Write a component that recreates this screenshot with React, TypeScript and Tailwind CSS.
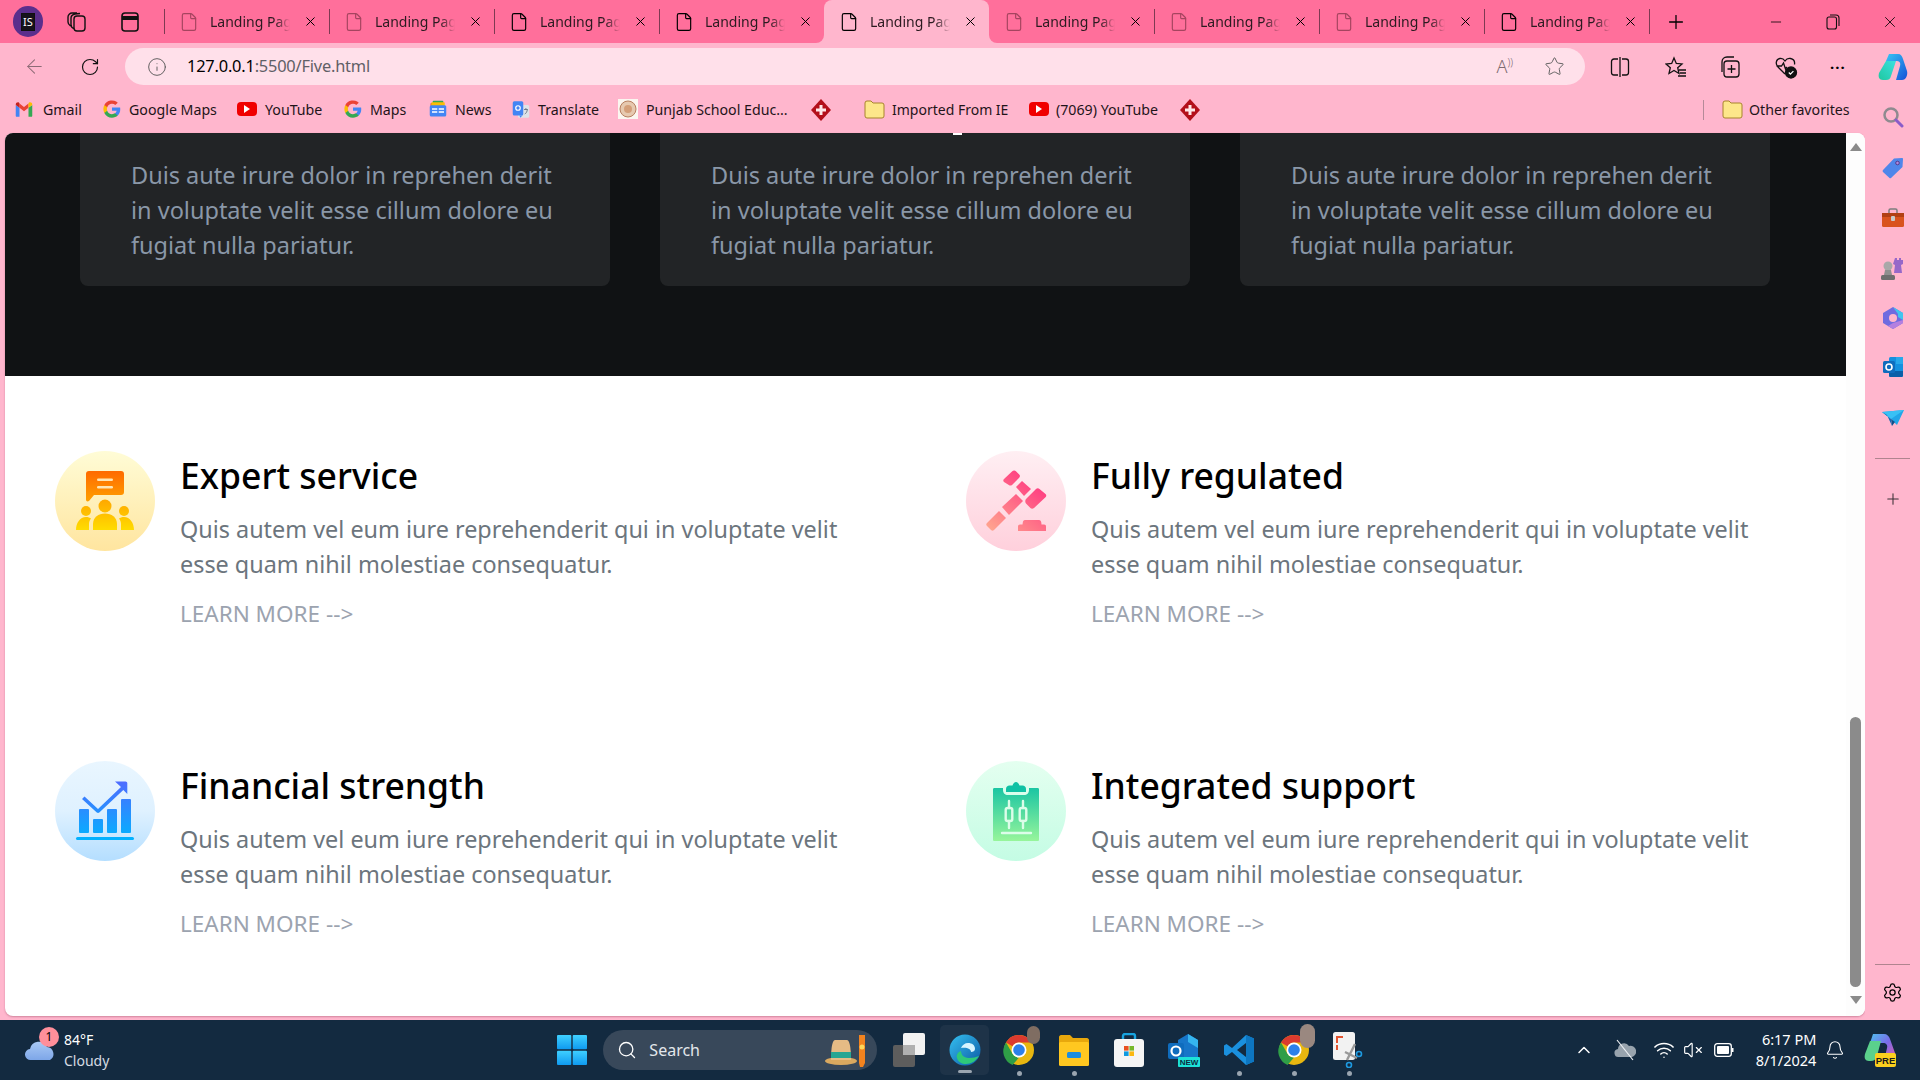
import { ArrowLeft, Bell, ChevronUp, File, Info, Minus, Plus, RotateCw, Search, Settings, Star, VolumeX, Wifi, X } from "lucide-react";

const tabsLeft = [false, false, true, true];
const tabsRight = [false, false, false, true];

const Tab = ({ dark, sep = true }: { dark: boolean; sep?: boolean }) => (
  <div className="relative flex h-[43px] w-[165px] items-center pl-[15px]">
    {sep && <div className="absolute left-0 top-[9px] h-[25px] w-px bg-[#7d3a52]" />}
    <File size={20} strokeWidth={1.4} className={dark ? "text-black" : "text-[#a5445f]"} />
    <span className="ml-[11px] w-[80px] overflow-hidden whitespace-nowrap text-[14px] text-[#2b1a20] [mask-image:linear-gradient(90deg,#000_82%,transparent)]">Landing Page</span>
    <X size={15} strokeWidth={1.6} className="ml-[13px] text-black" />
  </div>
);

const GoogleG = () => (
  <svg width="18" height="18" viewBox="0 0 24 24">
    <path fill="#4285F4" d="M23 12.3c0-.8-.1-1.6-.2-2.3H12v4.4h6.2a5.300 5.300 0 0 1-2.300 3.500v2.900h3.700C21.800 18.800 23 15.800 23 12.300z" />
    <path fill="#34A853" d="M12 23.500c3.100 0 5.700-1 7.600-2.800l-3.700-2.900c-1 .7-2.300 1.100-3.900 1.100-3 0-5.500-2-6.400-4.700H1.800v3A11.500 11.500 0 0 0 12 23.500z" />
    <path fill="#FBBC05" d="M5.600 14.200a6.900 6.900 0 0 1 0-4.400v-3H1.800a11.500 11.500 0 0 0 0 10.400l3.800-3z" />
    <path fill="#EA4335" d="M12 5.100c1.700 0 3.200.6 4.400 1.700l3.300-3.300A11.500 11.500 0 0 0 1.800 6.800l3.800 3C6.500 7.100 9 5.100 12 5.100z" />
  </svg>
);

const Gmail = () => (
  <svg width="18" height="15" viewBox="0 0 24 20">
    <path fill="#4285F4" d="M1 18.500V4l5 3.800v12H2.500A1.500 1.500 0 0 1 1 18.500z" />
    <path fill="#34A853" d="M18 7.800 23 4v14.500a1.500 1.500 0 0 1-1.500 1.300H18z" />
    <path fill="#EA4335" d="M6 7.800V2l6 4.500L18 2v5.800l-6 4.500z" />
    <path fill="#C5221F" d="M1 4v-.5C1 1 3.700-.3 5.500 1L6 2v5.800z" />
    <path fill="#FBBC04" d="M18 2l.5-1C20.300-.3 23 1 23 3.500V4l-5 3.800z" />
  </svg>
);

const YouTubeIcon = () => (
  <div className="flex h-[14px] w-[20px] items-center justify-center rounded-[4px] bg-[#f00000]">
    <div className="h-0 w-0 border-y-[4px] border-l-[6px] border-y-transparent border-l-white" />
  </div>
);

const NewsIcon = () => (
  <svg width="18" height="18" viewBox="0 0 24 24">
    <rect x="5" y="1" width="14" height="6" rx="1" fill="#34A853" />
    <rect x="2" y="4" width="16" height="6" rx="1" fill="#EA4335" />
    <rect x="3" y="3" width="18" height="6" rx="1" fill="#FBBC05" />
    <rect x="1" y="7" width="22" height="15" rx="2" fill="#4285F4" />
    <rect x="4" y="11" width="7" height="2" fill="#fff" />
    <rect x="4" y="15" width="7" height="2" fill="#fff" />
    <rect x="13" y="11" width="7" height="2" fill="#fff" />
    <rect x="13" y="15" width="7" height="2" fill="#fff" />
  </svg>
);

const TranslateIcon = () => (
  <svg width="19" height="19" viewBox="0 0 24 24">
    <rect x="8" y="6" width="15" height="17" rx="2" fill="#dfe3e8" />
    <path d="M11 23l3-3h-4z" fill="#4285F4" />
    <rect x="1" y="1" width="14" height="19" rx="2" fill="#4285F4" />
    <circle cx="8" cy="10" r="3" fill="none" stroke="#fff" strokeWidth="1.6" />
    <path d="M16 12h5M18.500 10v2M17 18c2-1 3-3 3.500-6" stroke="#5f6b7a" strokeWidth="1.100" fill="none" />
  </svg>
);

const SchoolIcon = () => (
  <svg width="20" height="20" viewBox="0 0 20 20">
    <rect width="20" height="20" fill="#fbf6f0" />
    <circle cx="10" cy="10" r="8" fill="#e6c9b0" stroke="#b77f5f" />
    <circle cx="10" cy="10" r="4" fill="#d49f7a" />
  </svg>
);

const Diamond = () => (
  <svg width="20" height="22" viewBox="0 0 20 22">
    <path d="M10 0 20 11 10 22 0 11z" fill="#b30f1a" />
    <path d="M8.500 6h3v3.500H15v3h-3.500V16h-3v-3.500H5v-3h3.500z" fill="#fde8e8" />
  </svg>
);

const FolderIcon = () => (
  <svg width="21" height="19" viewBox="0 0 21 19">
    <path d="M1 3a2 2 0 0 1 2-2h4l2 2h9a2 2 0 0 1 2 2v11a2 2 0 0 1-2 2H3a2 2 0 0 1-2-2z" fill="#fde68a" stroke="#a8842c" />
  </svg>
);

const bookmarks = [
  { icon: <Gmail />, label: "Gmail", box: "w-[18px]", ml: "ml-[10px]", w: "w-[38px]", gap: "mr-[22px]" },
  { icon: <GoogleG />, label: "Google Maps", box: "w-[18px]", ml: "ml-[8px]", w: "w-[88px]", gap: "mr-[20px]" },
  { icon: <YouTubeIcon />, label: "YouTube", box: "w-[20px]", ml: "ml-[8px]", w: "w-[57px]", gap: "mr-[22px]" },
  { icon: <GoogleG />, label: "Maps", box: "w-[18px]", ml: "ml-[8px]", w: "w-[36px]", gap: "mr-[23px]" },
  { icon: <NewsIcon />, label: "News", box: "w-[18px]", ml: "ml-[8px]", w: "w-[36px]", gap: "mr-[21px]" },
  { icon: <TranslateIcon />, label: "Translate", box: "w-[18px]", ml: "ml-[8px]", w: "w-[58px]", gap: "mr-[22px]" },
  { icon: <SchoolIcon />, label: "Punjab School Educ...", box: "w-[20px]", ml: "ml-[8px]", w: "w-[141px]", gap: "mr-[24px]" },
];

const Bookmark = ({ icon, label, box, ml, w, gap }: { icon: React.ReactNode; label: string; box: string; ml: string; w: string; gap: string }) => (
  <div className={`flex items-center ${gap}`}>
    <div className={`flex items-center justify-center ${box}`}>{icon}</div>
    <span className={`whitespace-nowrap ${ml} ${w}`}>{label}</span>
  </div>
);

const Chrome = () => (
  <svg width="32" height="32" viewBox="0 0 32 32">
    <circle cx="16" cy="16" r="15" fill="#e8b710" />
    <path d="M16 1a15 15 0 0 1 13 7.500H16a7.500 7.500 0 0 0-6.500 3.800L3 8.500A15 15 0 0 1 16 1z" fill="#db3a2f" />
    <path d="M3 8.500l6.500 11.300A7.500 7.500 0 0 0 16 23.500L9.500 31A15 15 0 0 1 3 8.500z" fill="#2f9e47" />
    <circle cx="16" cy="16" r="7.500" fill="#fff" />
    <circle cx="16" cy="16" r="5.800" fill="#2d80ea" />
  </svg>
);

const ExpertIcon = () => (
  <svg width="100" height="100" viewBox="0 0 100 100">
    <defs>
      <linearGradient id="ex1" x1="0" y1="0" x2="0" y2="1"><stop offset="0" stopColor="#ff6a00" /><stop offset="1" stopColor="#ffa000" /></linearGradient>
      <linearGradient id="ex2" gradientUnits="userSpaceOnUse" x1="0" y1="48" x2="0" y2="79"><stop offset="0" stopColor="#ffa600" /><stop offset="1" stopColor="#ffdc00" /></linearGradient>
    </defs>
    <path d="M34 20h32a3 3 0 0 1 3 3v18a3 3 0 0 1-3 3H39l-5 6c-1.500 1-3 .5-3-1.500V23a3 3 0 0 1 3-3z" fill="url(#ex1)" />
    <rect x="42" y="27.500" width="16" height="2.500" rx="1.200" fill="#ffe6b3" />
    <rect x="42" y="35" width="16" height="2.500" rx="1.200" fill="#ffe6b3" />
    <g fill="url(#ex2)">
      <circle cx="50" cy="55" r="6.500" />
      <path d="M38 79v-6c0-6.500 5.500-10.500 12-10.500S62 66.500 62 73v6z" />
      <circle cx="31" cy="60" r="5" />
      <path d="M21 79c0-7 4-13 10-13 2 0 4 .6 5 1.500-1.600 2-2 4-2 6v5.500z" />
      <circle cx="69" cy="60" r="5" />
      <path d="M79 79c0-7-4-13-10-13-2 0-4 .6-5 1.500 1.600 2 2 4 2 6v5.500z" />
    </g>
  </svg>
);

const GavelIcon = () => (
  <svg width="100" height="100" viewBox="0 0 100 100">
    <defs>
      <linearGradient id="ga2" gradientUnits="userSpaceOnUse" x1="22" y1="80" x2="70" y2="22"><stop offset="0" stopColor="#ffa88f" /><stop offset="1" stopColor="#ff3280" /></linearGradient>
    </defs>
    <g fill="url(#ga2)">
      <path d="M38 28 46 20.500c1.300-1.200 3-1.200 4.200 0l3 3c1 1 1 2.200 0 3.200L46 34c-1 .8-2.200.8-3.200 0L38 31c-1-.8-1-2.200 0-3z" />
      <path d="m50 36 6-6 9 8-7 7z" />
      <path d="M60 48 70 38c1-1 2.500-1 3.500 0l6 5c1 1 1 2.200 0 3.200L68 57c-1.200 1-2.600 1-3.600 0L60 52.500c-1-1.200-1-3.200 0-4.500z" />
      <path d="m36 56 14-13 7 7-14 14z" />
      <path d="m21 72 12-12 7 7-12 12c-1 1-2 1-3 0l-4-4c-1-1-1-2 0-3z" />
      <path d="M59 69h14c1.500 0 2 1 2.300 2.500l.2 2H78c1.500 0 2 .8 2 2V80H52v-4.500c0-1.200.8-2 2-2h2.500l.3-2C57 70 57.600 69 59 69z" />
    </g>
  </svg>
);

const ChartIcon = () => (
  <svg width="100" height="100" viewBox="0 0 100 100">
    <defs>
      <linearGradient id="ch1" gradientUnits="userSpaceOnUse" x1="0" y1="20" x2="0" y2="80"><stop offset="0" stopColor="#4f6bff" /><stop offset="1" stopColor="#00b4ff" /></linearGradient>
    </defs>
    <g fill="url(#ch1)">
      <rect x="24" y="48" width="10" height="24" rx="1" />
      <rect x="38" y="58" width="10" height="14" rx="1" />
      <rect x="52" y="48" width="10" height="24" rx="1" />
      <rect x="66" y="38" width="10" height="34" rx="1" />
      <rect x="21" y="76" width="58" height="3" rx="1.500" />
      <path d="M60 20.500h10.500c1 0 1.800.8 1.800 1.800V33l-4-4-24 22.500c-.7.600-1.800.6-2.500 0L27 38l2.500-2.500L43 48 66 26l-6-5.500z" />
    </g>
  </svg>
);

const ClipboardIcon = () => (
  <svg width="100" height="100" viewBox="0 0 100 100">
    <defs>
      <linearGradient id="cl1" gradientUnits="userSpaceOnUse" x1="0" y1="21" x2="0" y2="80"><stop offset="0" stopColor="#0cc0a4" /><stop offset="1" stopColor="#97f59b" /></linearGradient>
    </defs>
    <path d="M28.500 27H37v2c0 3 2 5 5 5h16c3 0 5-2 5-5v-2h8.500c1 0 1.500.5 1.500 1.500V78.500c0 1-.5 1.500-1.500 1.500h-43c-1 0-1.500-.5-1.500-1.500V28.500c0-1 .5-1.500 1.500-1.500z" fill="url(#cl1)" />
    <path d="M40 28c0-2 1.500-3.500 3.500-3.500h3c.8-2 2-3.500 3.500-3.500s2.700 1.500 3.500 3.500h3c2 0 3.500 1.500 3.500 3.500v3H40z" fill="#10c1a4" />
    <g fill="none" stroke="#dcfde9" strokeWidth="2.400" strokeLinecap="round">
      <path d="M43 40v7M43 60v7M57 40v7M57 60v7" />
      <rect x="39.700" y="47" width="6.600" height="13" rx="2" />
      <rect x="53.700" y="47" width="6.600" height="13" rx="2" />
      <path d="M36 72h29" />
    </g>
  </svg>
);

const features = [
  { title: "Expert service", circle: "bg-gradient-to-b from-[#fffcd6] to-[#ffe59f]", icon: <ExpertIcon /> },
  { title: "Fully regulated", circle: "bg-gradient-to-b from-[#ffeff3] to-[#ffd0dc]", icon: <GavelIcon /> },
  { title: "Financial strength", circle: "bg-gradient-to-b from-[#e9f6ff] via-[#dff1ff] to-[#b4deff]", icon: <ChartIcon /> },
  { title: "Integrated support", circle: "bg-gradient-to-b from-[#e4fff0] to-[#c4fce4]", icon: <ClipboardIcon /> },
];

const Feature = ({ title, circle, icon }: { title: string; circle: string; icon: React.ReactNode }) => (
  <div className="flex">
    <div className={`h-[100px] w-[100px] shrink-0 rounded-full ${circle}`}>{icon}</div>
    <div className="ml-[25px]">
      <h3 className="text-[35.5px] font-medium leading-[48px] text-black">{title}</h3>
      <p className="mt-[13px] w-[700px] text-[23.4px] leading-[35px] text-[#6c757d]">
        Quis autem vel eum iure reprehenderit qui in voluptate velit esse quam nihil molestiae consequatur.
      </p>
      <a className="mt-[14px] block text-[22.5px] leading-[35px] text-[#9ca3af]">LEARN MORE --&gt;</a>
    </div>
  </div>
);

const DarkCard = ({ peek }: { peek?: boolean }) => (
  <div className="relative h-[153px] w-[530px] rounded-b-lg bg-[#222426] pl-[51px] pt-[25px] text-[23.5px] leading-[35px] text-[#8a97a8]">
    {peek && <div className="absolute left-[293px] top-0 h-[2px] w-[9px] bg-white" />}
    <p className="w-[440px]">Duis aute irure dolor in reprehen derit in voluptate velit esse cillum dolore eu fugiat nulla pariatur.</p>
  </div>
);

const SideIcons = () => (
  <div className="flex w-[55px] flex-col items-center bg-[#ffb6cd]">
    <svg className="mt-[-27px]" width="22" height="22" viewBox="0 0 22 22"><circle cx="9" cy="9" r="6.500" fill="none" stroke="#8f8a8f" strokeWidth="2.500" /><path d="M14 14l6 6" stroke="#8a5cc8" strokeWidth="3" strokeLinecap="round" /></svg>
    <svg className="mt-[29px]" width="22" height="22" viewBox="0 0 22 22"><path d="M1 13 12 1.500 20 1c.6 0 1 .4 1 1l-.5 8L9 21c-.5.4-1 .4-1.500 0L1 15c-.5-.6-.5-1.500 0-2z" fill="#4f86ea" /><circle cx="15.500" cy="6" r="1.800" fill="#b08be0" stroke="#553a8a" /></svg>
    <svg className="mt-[29px]" width="22" height="20" viewBox="0 0 22 20"><path d="M7 6V2.500C7 1.500 7.500 1 8.500 1h5c1 0 1.500.5 1.500 1.500V6" fill="none" stroke="#7d7d7d" strokeWidth="1.500" /><rect y="5" width="22" height="14" rx="1.500" fill="#d9531e" /><rect y="5" width="22" height="4" fill="#b23f13" /><rect x="9" y="8" width="4" height="5" rx="1" fill="#c9c9c9" /></svg>
    <svg className="mt-[28px]" width="24" height="24" viewBox="0 0 24 24"><path d="M14 2h2v2h2V2h2v2h2V2h0v6l-2 1 1 8h-8l1-8-2-1z" fill="#9668c9" /><circle cx="7" cy="10" r="4.500" fill="#a8a8a8" /><path d="M4 14h6l1 5H3z" fill="#8f8f8f" /><rect y="19" width="14" height="5" rx="1.500" fill="#6e6e6e" /></svg>
    <svg className="mt-[27px]" width="20" height="22" viewBox="0 0 20 22"><path d="M10 0 20 6v10l-10 6L0 16V6z" fill="#6f6be0" /><path d="M10 0 20 6v7l-5-3V7z" fill="#41c5ee" /><path d="M20 13v3l-10 6-5-3 5-3z" fill="#b47fe0" /><circle cx="10" cy="11" r="4" fill="#ffb6cd" /></svg>
    <svg className="mt-[28px]" width="20" height="20" viewBox="0 0 20 20"><rect x="6" y="0" width="14" height="20" rx="1.500" fill="#1490df" /><rect x="13" y="0" width="7" height="7" fill="#28a8ea" /><path d="M6 14h14v4.500c0 .8-.7 1.500-1.500 1.500H7.500C6.700 20 6 19.300 6 18.500z" fill="#0a5fa8" /><rect x="0" y="4" width="12" height="12" rx="1.500" fill="#0f6cbd" /><circle cx="6" cy="10" r="3" fill="none" stroke="#fff" strokeWidth="1.600" /></svg>
    <svg className="mt-[33px]" width="22" height="16" viewBox="0 0 22 16"><path d="M0 2 22 0 15 15 9 9z" fill="#22a6e8" /><path d="M0 2 22 0 9 9z" fill="#39c1f5" /><path d="M9 9 10 16l3-4z" fill="#0f4f8a" /><path d="M0 2l9 7 1 7-5-11z" fill="#1468b5" /></svg>
    <div className="mt-[32px] h-px w-[35px] bg-[#b0848f]" />
    <Plus size={18} strokeWidth={1.4} className="mt-[31px] text-[#3a3036]" />
    <div className="mt-auto h-px w-[35px] bg-[#b0848f]" />
    <Settings size={21} strokeWidth={1.4} className="mb-[17px] mt-[17px] text-black" />
  </div>
);

function TaskItem({ children, dot = false }: { children: React.ReactNode; dot?: boolean }) {
  return (
    <div className="relative flex h-[50px] w-[32px] items-center justify-center">
      {children}
      {dot && <div className="absolute bottom-[-1px] h-[5px] w-[5px] rounded-full bg-[#9aa5b0]" />}
    </div>
  );
}

export default function App() {
  return (
    <div className="flex h-screen w-full flex-col overflow-hidden bg-[#ffb6cd] font-['Noto_Sans',sans-serif]">
      {/* tab strip */}
      <div className="flex h-[43px] shrink-0 bg-[#ffb6cd]">
        <div className="flex w-[824px] rounded-br-lg bg-[#ff6f9b]">
          <div className="flex w-[164px] items-center">
            <div className="ml-[13px] flex h-[31px] w-[30px] items-center justify-center rounded-full bg-[#5b2e8c]">
              <div className="border border-[#101010] bg-[#16121c] px-[1px] text-[11px] leading-[16px] text-white">IS</div>
            </div>
            <svg className="ml-[23px]" width="22" height="22" viewBox="0 0 22 22" fill="none" stroke="#111" strokeWidth="1.400"><rect x="8" y="5" width="11" height="15" rx="3" /><path d="M8 17.500c-2-.5-3-2-3-4V7c0-2 2-3.500 4-4l5-.5M4.500 15C3 14 2 13 2 11V6c0-2 2-4 4-4h5" /></svg>
            <svg className="ml-[33px]" width="18" height="20" viewBox="0 0 18 20" fill="none" stroke="#111" strokeWidth="1.600"><rect x="1" y="1" width="16" height="18" rx="3" /><path d="M1 6h16" strokeWidth="4" /></svg>
          </div>
          {tabsLeft.map((dark, i) => (
            <Tab key={i} dark={dark} />
          ))}
        </div>
        <div className="w-[165px] bg-[#ff6f9b]">
          <div className="flex h-[43px] items-center rounded-t-lg bg-[#ffb6cd] pl-[15px]">
            <File size={20} strokeWidth={1.4} className="text-black" />
            <span className="ml-[11px] w-[80px] overflow-hidden whitespace-nowrap text-[14px] text-[#2b1a20] [mask-image:linear-gradient(90deg,#000_82%,transparent)]">Landing Page</span>
            <X size={15} strokeWidth={1.6} className="ml-[13px] text-black" />
          </div>
        </div>
        <div className="flex flex-1 rounded-bl-lg bg-[#ff6f9b]">
          {tabsRight.map((dark, i) => (
            <Tab key={i} dark={dark} sep={i > 0} />
          ))}
          <div className="h-[25px] w-px self-center bg-[#7d3a52]" />
          <Plus size={22} strokeWidth={1.4} className="ml-[15px] self-center text-black" />
          <Minus size={16} strokeWidth={1.2} className="ml-[81px] self-center text-black" />
          <svg className="ml-[42px] self-center" width="14" height="16" viewBox="0 0 14 16" fill="none" stroke="#111" strokeWidth="1.100"><rect x="1" y="3" width="9.500" height="12" rx="2" /><path d="M4 1h6c2 0 3 1 3 3v8" /></svg>
          <X size={18} strokeWidth={1.1} className="ml-[41px] self-center text-black" />
        </div>
      </div>

      {/* address bar */}
      <div className="flex h-[45px] shrink-0 items-center bg-[#ffb6cd] pt-[2px]">
        <ArrowLeft size={23} strokeWidth={1.1} className="ml-[23px] text-[#8d6a76]" />
        <RotateCw size={20} strokeWidth={1.4} className="ml-[34px] text-[#111]" />
        <div className="ml-[25px] flex h-[37px] w-[1460px] items-center rounded-full bg-[#ffe0ea]">
          <Info size={20} strokeWidth={1.1} className="ml-[22px] text-[#555]" />
          <span className="ml-[20px] text-[16.4px] tracking-[-0.2px] text-black">127.0.0.1<span className="text-[#5f5f66]">:5500/Five.html</span></span>
          <span className="ml-auto text-[18px] font-light text-[#7c6a70]">A<span className="align-super text-[10px]">))</span></span>
          <Star size={21} strokeWidth={1.1} className="ml-[31px] mr-[20px] text-[#5f5f5f]" />
        </div>
        <svg className="ml-[25px]" width="20" height="22" viewBox="0 0 20 22" fill="none" stroke="#111" strokeWidth="1.300"><path d="M8 3H4C2.500 3 1.500 4 1.500 5.500v11C1.500 18 2.500 19 4 19h4M12 3h4c1.500 0 2.500 1 2.500 2.500v11c0 1.500-1 2.500-2.500 2.500h-4M10 1v20" /></svg>
        <svg className="ml-[35px]" width="22" height="22" viewBox="0 0 22 22" fill="none" stroke="#111" strokeWidth="1.300"><path d="M9 2l2.300 5.400 5.700.5-4.300 3.800 1.300 5.800L9 14.500l-5 3 1.300-5.800L1 8l5.700-.6zM14 14h7M15 17h6M13 20h8" /></svg>
        <svg className="ml-[32px]" width="22" height="24" viewBox="0 0 22 24" fill="none" stroke="#111" strokeWidth="1.300"><rect x="5" y="6" width="15" height="16" rx="3" /><path d="M3 17V7c0-3 2-5 5-5h7M12.500 10v8M8.500 14h8" /></svg>
        <svg className="ml-[33px]" width="24" height="24" viewBox="0 0 24 24" fill="none" stroke="#111" strokeWidth="1.300"><path d="M11 19 4 12C1 9 2 4 6 3.500c2.500-.3 4 1 5 2.500 1-1.500 3-3 5.500-2.500 3 .6 4.500 3 4 6M2.500 11h5l2-3 2 6 1.500-2" /><circle cx="17" cy="17.500" r="5.500" fill="#111" /><path d="M14.800 17.500l1.600 1.600 3-3" stroke="#fff" /></svg>
        <span className="ml-[32px] text-[15px] font-bold leading-[10px] tracking-[1px] text-black">···</span>
        <svg className="ml-[32px]" width="30" height="30" viewBox="0 0 30 30">
          <defs>
            <linearGradient id="cop1" x1="0" y1="0" x2="1" y2="1"><stop offset="0" stopColor="#37c6f4" /><stop offset="1" stopColor="#1450d8" /></linearGradient>
            <linearGradient id="cop2" x1="0" y1="1" x2="1" y2="0"><stop offset="0" stopColor="#1fc8a0" /><stop offset="1" stopColor="#3ce0e0" /></linearGradient>
          </defs>
          <path d="M11 2h9c3 0 4 2 5 5l4 12c1 4-1 9-5 9h-6l4-14c1-4-1-5-4-5H8z" fill="url(#cop1)" />
          <path d="M8 9h10l-5 15c-1 3-2 4-5 4H5c-4 0-5-3-4-7z" fill="url(#cop2)" />
        </svg>
      </div>

      {/* bookmarks */}
      <div className="flex h-[45px] shrink-0 items-center bg-[#ffb6cd] pb-[2px] pl-[15px] text-[14.2px] text-[#1f1419]">
        {bookmarks.map((b) => (
          <Bookmark key={b.label} {...b} />
        ))}
        <Diamond />
        <div className="ml-[33px] flex items-center">
          <FolderIcon />
          <span className="ml-[7px] w-[115px] whitespace-nowrap text-[14px]">Imported From IE</span>
        </div>
        <div className="ml-[22px] flex items-center">
          <YouTubeIcon />
          <span className="ml-[7px] w-[102px] whitespace-nowrap">(7069) YouTube</span>
        </div>
        <div className="ml-[22px]"><Diamond /></div>
        <div className="ml-[503px] h-[20px] w-px bg-[#b58a98]" />
        <div className="ml-[18px] flex items-center">
          <FolderIcon />
          <span className="ml-[6px] whitespace-nowrap">Other favorites</span>
        </div>
      </div>

      {/* page */}
      <div className="flex min-h-0 flex-1">
        <div className="ml-[5px] flex h-[883px] w-[1860px] shrink-0 overflow-hidden rounded-lg bg-white shadow-[0_1px_2px_rgba(120,40,70,0.35)]">
          <div className="w-[1841px] shrink-0">
            <div className="flex h-[243px] justify-center gap-[50px] bg-[#101214] pr-[1px]">
              <DarkCard />
              <DarkCard peek />
              <DarkCard />
            </div>
            <div className="grid grid-cols-[911px_1fr] grid-rows-[310px_310px] pl-[50px] pt-[75px]">
              {features.map((f) => (
                <Feature key={f.title} {...f} />
              ))}
            </div>
          </div>
          <div className="flex w-[19px] flex-col items-center bg-[#fdfdfd]">
            <div className="mt-[10px] h-0 w-0 border-x-[6px] border-b-[8px] border-x-transparent border-b-[#8a8a8a]" />
            <div className="mt-[566px] h-[270px] w-[11px] rounded-full bg-[#8b8b8b]" />
            <div className="mt-[9px] h-0 w-0 border-x-[6px] border-t-[8px] border-x-transparent border-t-[#8a8a8a]" />
          </div>
        </div>
        <SideIcons />
      </div>

      {/* taskbar */}
      <div className="relative flex h-[60px] shrink-0 items-center bg-[#132a40] text-white">
        <div className="relative ml-[25px] flex w-[40px] items-center">
          <svg width="31" height="24" viewBox="0 0 31 24">
            <defs><linearGradient id="cld" x1="0" y1="0" x2="0" y2="1"><stop offset="0" stopColor="#a9c9f5" /><stop offset="1" stopColor="#7da6e8" /></linearGradient></defs>
            <path d="M6 22a5.500 5.500 0 0 1-1-11 9 9 0 0 1 17-2 7 7 0 0 1 3 13z" fill="url(#cld)" />
          </svg>
          <div className="absolute left-[14px] top-[-11px] flex h-[20px] w-[20px] items-center justify-center rounded-full bg-[#ff8f9b] text-[12px] text-black">1</div>
        </div>
        <div className="-ml-[1px] text-[14px] leading-[21px]">
          <div>84°F</div>
          <div className="text-[#d5dbe2]">Cloudy</div>
        </div>
        <svg className="ml-[448px]" width="30" height="30" viewBox="0 0 30 30">
          <defs><linearGradient id="win" x1="0" y1="0" x2="0" y2="1"><stop offset="0" stopColor="#3fd0ff" /><stop offset="1" stopColor="#0f9af0" /></linearGradient></defs>
          <g fill="url(#win)"><rect width="14.300" height="14.300" rx="1" /><rect x="15.700" width="14.300" height="14.300" rx="1" /><rect y="15.700" width="14.300" height="14.300" rx="1" /><rect x="15.700" y="15.700" width="14.300" height="14.300" rx="1" /></g>
        </svg>
        <div className="ml-[16px] flex h-[40px] w-[274px] items-center rounded-full bg-[#38485a]">
          <Search size={20} strokeWidth={1.6} className="ml-[14px] text-white" />
          <span className="ml-[12px] text-[16px] text-[#e3e7eb]">Search</span>
          <svg className="ml-auto mr-[12px]" width="40" height="34" viewBox="0 0 40 34">
            <ellipse cx="16" cy="28" rx="16" ry="4" fill="#d9a85f" />
            <path d="M6 27c0-10 1-20 4-20h12c3 0 4 10 4 20z" fill="#e5bb85" />
            <rect x="6" y="19" width="20" height="6" fill="#27a693" />
            <path d="M34 2h6v28l-2 4h-3l-1-4z" fill="#f2831f" />
            <circle cx="37" cy="14" r="2.500" fill="#ffd75a" />
          </svg>
        </div>
        <svg className="ml-[16px]" width="32" height="34" viewBox="0 0 32 34">
          <rect x="0" y="12" width="22" height="22" rx="2" fill="#5d5d5d" />
          <rect x="10" y="0" width="22" height="22" rx="2" fill="#f2f2f2" />
          <rect x="10" y="12" width="12" height="10" fill="#b0b0b0" />
        </svg>
        <div className="relative ml-[15px] flex h-[50px] w-[49px] items-center justify-center rounded-[5px] bg-[#1e3348]">
          <svg width="32" height="32" viewBox="0 0 32 32">
            <defs><linearGradient id="edg" x1="0" y1="0" x2="1" y2="1"><stop offset="0" stopColor="#35c1f1" /><stop offset="1" stopColor="#0c59a4" /></linearGradient></defs>
            <circle cx="16" cy="16" r="15.500" fill="url(#edg)" />
            <path d="M30 22c-3 5-8 8-13 8-4 0-8-2-9-6-1-3 1-6 4-7 0 3 2 7 8 7 4 0 7-1 10-2z" fill="#2ec87a" />
            <path d="M12 14c1-3 4-5 7-5 4 0 7 2 7 6 0 2-2 3-4 3 0-3-4-5-10-4z" fill="#d7f5ff" />
          </svg>
          <div className="absolute bottom-[2px] h-[3px] w-[14px] rounded-full bg-[#9aa5b0]" />
        </div>
        <div className="ml-[14px] flex gap-[23px]">
          <TaskItem dot><div className="relative"><Chrome /><div className="absolute -right-[5px] -top-[8px] h-[18px] w-[13px] rounded-full bg-[#7f6d62]" /></div></TaskItem>
          <TaskItem dot>
            <svg width="32" height="32" viewBox="0 0 32 32"><path d="M1 3c0-1 1-2 2-2h9l3 3h14c1 0 2 1 2 2v4H1z" fill="#e8a80c" /><rect x="1" y="8" width="30" height="24" rx="1.500" fill="#ffc720" /><rect x="9" y="18" width="14" height="6" rx="1.500" fill="#1c8de0" /></svg>
          </TaskItem>
          <TaskItem>
            <svg width="30" height="34" viewBox="0 0 30 34"><path d="M9 7V3c0-1 1-2 2-2h8c1 0 2 1 2 2v4" fill="none" stroke="#18a4e0" strokeWidth="2.400" /><rect y="6" width="30" height="28" rx="3" fill="#f5f5f5" /><rect x="10" y="13" width="4.600" height="4.600" fill="#e8501f" /><rect x="15.400" y="13" width="4.600" height="4.600" fill="#76b82a" /><rect x="10" y="18.400" width="4.600" height="4.600" fill="#0f9ae0" /><rect x="15.400" y="18.400" width="4.600" height="4.600" fill="#fbb811" /></svg>
          </TaskItem>
          <TaskItem>
            <svg width="32" height="34" viewBox="0 0 32 34"><path d="M10 7l10-6 10 6v20H10z" fill="#1776c9" /><path d="M20 1l10 6v8l-10-6z" fill="#35b5ef" /><rect x="0" y="10" width="16" height="16" rx="2" fill="#0f6cbd" /><circle cx="8" cy="18" r="4.500" fill="none" stroke="#fff" strokeWidth="2.200" /><rect x="10" y="24" width="22" height="10" rx="1" fill="#1de2d8" /><text x="21" y="32" fontSize="8" fontWeight="700" textAnchor="middle" fill="#0b2c3f" fontFamily="Liberation Sans">NEW</text></svg>
          </TaskItem>
          <TaskItem dot>
            <svg width="32" height="32" viewBox="0 0 32 32"><path d="M23 1 31 4.500v23L23 31 9 18l-5.500 4L1 20.500v-9L3.500 10 9 14z" fill="#1a90de" /><path d="M23 9 14 16l9 7z" fill="#132a40" /><path d="M23 1 31 4.500v23L23 31z" fill="#0d76c1" /></svg>
          </TaskItem>
          <TaskItem dot><div className="relative"><Chrome /><div className="absolute -right-[5px] -top-[10px] h-[24px] w-[15px] rounded-full bg-[#9a8880]" /></div></TaskItem>
          <TaskItem dot>
            <svg width="32" height="36" viewBox="0 0 32 36"><rect width="22" height="28" rx="2.500" fill="#f2f2f2" /><path d="M3 4h7v2H5v5H3z" fill="#e2532f" /><rect x="3" y="13" width="2" height="5" fill="#e2532f" /><path d="M12 20l12 6M22 12 14 28" stroke="#9a9a9a" strokeWidth="2.400" /><circle cx="16" cy="33" r="2.500" fill="none" stroke="#1e9ae0" strokeWidth="1.600" /><circle cx="26" cy="22" r="2.500" fill="none" stroke="#1e9ae0" strokeWidth="1.600" /></svg>
          </TaskItem>
        </div>
        <ChevronUp size={20} strokeWidth={1.8} className="ml-[209px] text-white" />
        <svg className="ml-[20px]" width="22" height="22" viewBox="0 0 22 22"><path d="M5 18a4 4 0 0 1-1-8 6 6 0 0 1 11-3 5 5 0 0 1 3 11z" fill="#98a3ad" /><path d="M3 1l16 20" stroke="#eef1f4" strokeWidth="1.200" /></svg>
        <Wifi size={22} strokeWidth={1.6} className="ml-[17px] text-white" />
        <VolumeX size={20} strokeWidth={1.4} className="ml-[8px] text-white" />
        <svg className="ml-[11px]" width="20" height="14" viewBox="0 0 20 14" fill="none"><rect x="0.700" y="0.700" width="16.600" height="12.600" rx="2.500" stroke="#fff" strokeWidth="1.300" /><rect x="3" y="3" width="12" height="8" rx="1" fill="#fff" /><rect x="18" y="5" width="1.500" height="4" fill="#fff" /></svg>
        <div className="ml-[4px] w-[78px] text-right text-[14.5px] leading-[21px]">
          <div>6:17 PM</div>
          <div>8/1/2024</div>
        </div>
        <Bell size={20} strokeWidth={1.3} className="ml-[9px] text-white" />
        <svg className="ml-[19px]" width="32" height="34" viewBox="0 0 32 34">
          <defs><linearGradient id="cop3" x1="0" y1="0" x2="1" y2="1"><stop offset="0" stopColor="#4ec0f0" /><stop offset="0.500" stopColor="#7a6be8" /><stop offset="1" stopColor="#e85ea8" /></linearGradient></defs>
          <path d="M9 1h11c3 0 5 2 6 5l5 14c1 4-1 8-5 8h-6l3-13c1-3-1-5-4-5H6z" fill="url(#cop3)" />
          <path d="M6 8h11l-4 15c-1 3-3 5-6 5H5c-4 0-5-3-4-7z" fill="#5ad08c" />
          <rect x="11" y="20" width="21" height="14" rx="2" fill="#fccf1e" />
          <text x="21.500" y="31" textAnchor="middle" fontSize="9.500" fontWeight="700" fill="#1a1a1a" fontFamily="Liberation Sans">PRE</text>
        </svg>
      </div>
    </div>
  );
}
